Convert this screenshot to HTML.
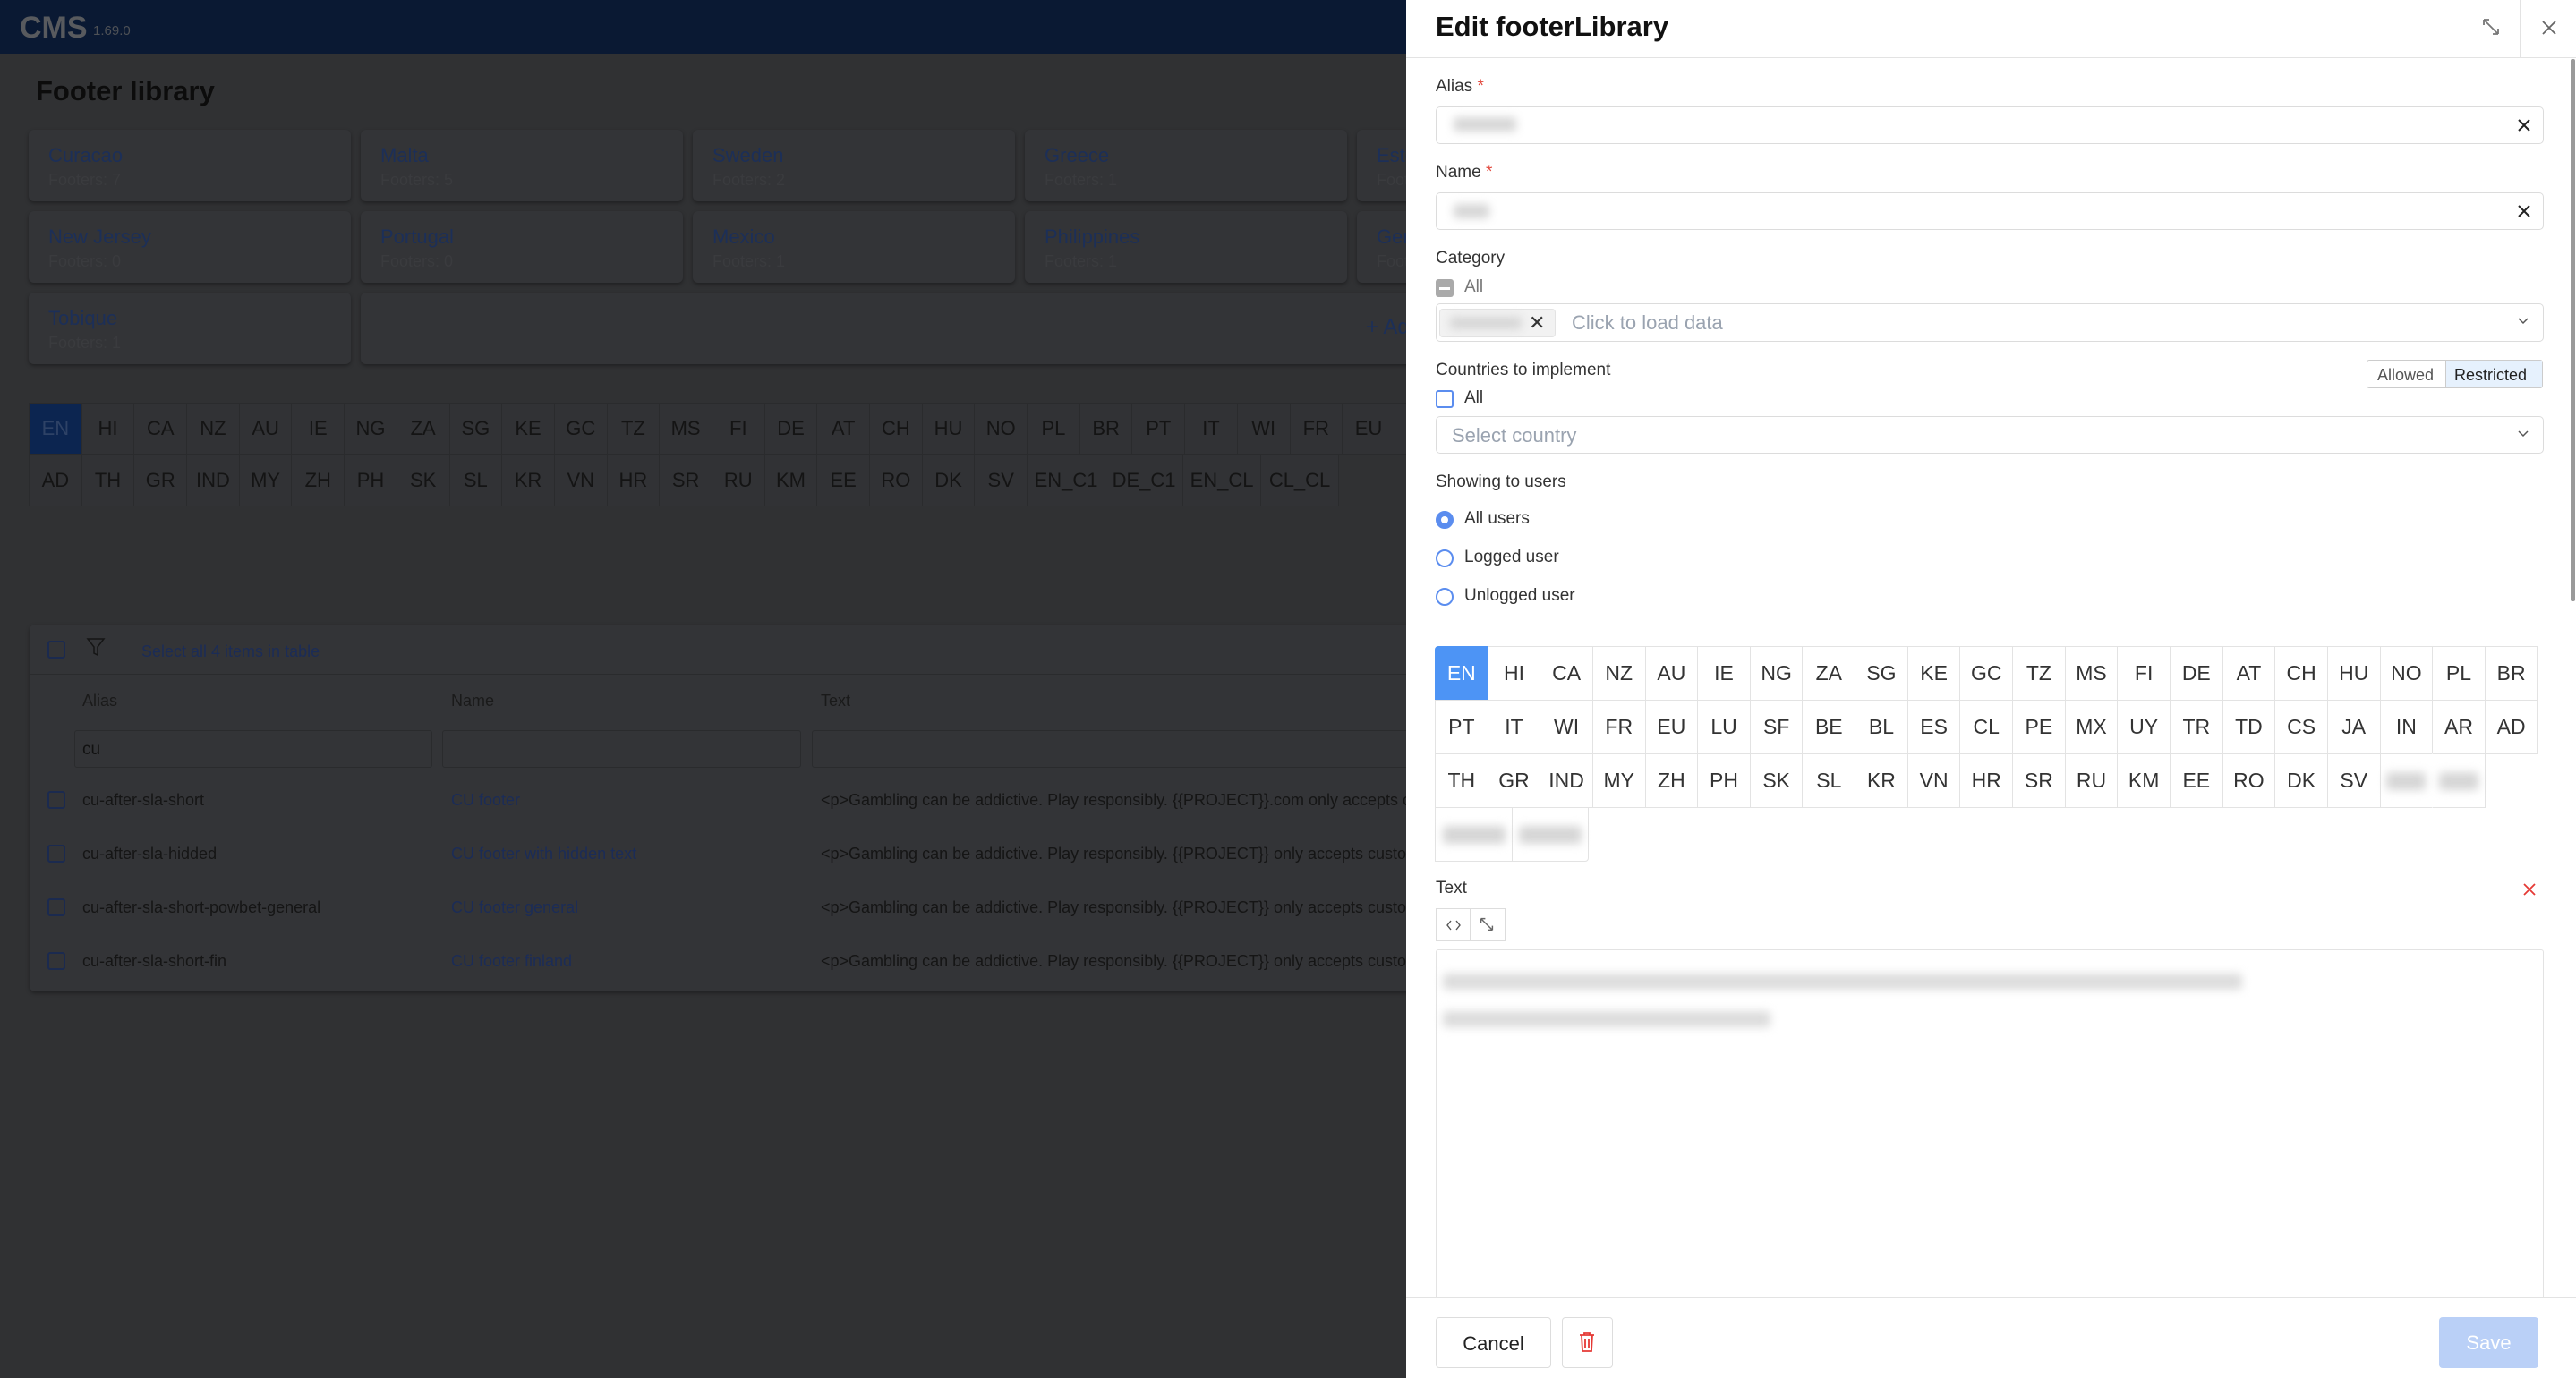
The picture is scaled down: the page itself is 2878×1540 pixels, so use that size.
<!DOCTYPE html>
<html><head><meta charset="utf-8">
<style>
*{box-sizing:border-box;margin:0;padding:0}
body{width:2878px;height:1540px;overflow:hidden;background:#303133;font-family:"Liberation Sans",sans-serif;position:relative}
.a{position:absolute}
.hdr{left:0;top:0;width:1571px;height:60px;background:#0a1933}
.card{background:#333437;border-radius:6px;box-shadow:0 2px 4px rgba(0,0,0,.35)}
.ct{font-size:22px;color:#1c2f58}
.cs{font-size:18px;color:#3a3b3e;margin-top:4px}
.lrow{display:flex}
.lc{width:59.7px;height:58px;border:1px solid #2a2b2d;margin:0 0 0 -1px;display:flex;align-items:center;justify-content:center;font-size:22px;color:#141414;background:#313235}
.dr{left:1571px;top:0;width:1307px;height:1540px;background:#fff}
.lbl{font-size:19px;color:#333;font-weight:500}
.inp{border:1px solid #dcdcdc;border-radius:5px;background:#fff}
.ph{font-size:22px;color:#9aa3b0}
.blur{background:#d6d6d6;filter:blur(5px);border-radius:4px}
.g{display:flex;flex-wrap:wrap;width:1234px}
.gc{width:59.65px;height:61px;border:1px solid #e3e3e3;margin:0 -1px -1px 0;display:flex;align-items:center;justify-content:center;font-size:23px;color:#333}
.rad{width:20px;height:20px;border:2px solid #5b8def;border-radius:50%}
.x{font-size:22px;color:#333}
</style></head><body>
<div class="a hdr"></div>
<div class="a" style="left:22px;top:12px;font-size:34px;font-weight:bold;color:#585a5e">CMS</div>
<div class="a" style="left:104px;top:26px;font-size:15px;color:#4e5156">1.69.0</div>
<div class="a" style="left:40px;top:84px;font-size:31px;font-weight:bold;color:#0c0c0c">Footer library</div>

<div class="a card" style="left:32px;top:145px;width:360px;height:80px;padding:16px 22px"><div class="ct">Curacao</div><div class="cs">Footers: 7</div></div>
<div class="a card" style="left:403px;top:145px;width:360px;height:80px;padding:16px 22px"><div class="ct">Malta</div><div class="cs">Footers: 5</div></div>
<div class="a card" style="left:774px;top:145px;width:360px;height:80px;padding:16px 22px"><div class="ct">Sweden</div><div class="cs">Footers: 2</div></div>
<div class="a card" style="left:1145px;top:145px;width:360px;height:80px;padding:16px 22px"><div class="ct">Greece</div><div class="cs">Footers: 1</div></div>
<div class="a card" style="left:1516px;top:145px;width:360px;height:80px;padding:16px 22px"><div class="ct">Estonia</div><div class="cs">Footers: 1</div></div>

<div class="a card" style="left:32px;top:236px;width:360px;height:80px;padding:16px 22px"><div class="ct">New Jersey</div><div class="cs">Footers: 0</div></div>
<div class="a card" style="left:403px;top:236px;width:360px;height:80px;padding:16px 22px"><div class="ct">Portugal</div><div class="cs">Footers: 0</div></div>
<div class="a card" style="left:774px;top:236px;width:360px;height:80px;padding:16px 22px"><div class="ct">Mexico</div><div class="cs">Footers: 1</div></div>
<div class="a card" style="left:1145px;top:236px;width:360px;height:80px;padding:16px 22px"><div class="ct">Philippines</div><div class="cs">Footers: 1</div></div>
<div class="a card" style="left:1516px;top:236px;width:360px;height:80px;padding:16px 22px"><div class="ct">Germany</div><div class="cs">Footers: 1</div></div>

<div class="a card" style="left:32px;top:327px;width:360px;height:80px;padding:16px 22px"><div class="ct">Tobique</div><div class="cs">Footers: 1</div></div>
<div class="a card" style="left:403px;top:327px;width:1300px;height:80px"></div>
<div class="a" style="left:1526px;top:352px;font-size:24px;color:#1c2f58">+ Add</div>

<div class="a" style="left:33px;top:450px">
<div class="lrow">
<div class="lc" style="background:#0c2550;color:#2e4266">EN</div><div class="lc">HI</div><div class="lc">CA</div><div class="lc">NZ</div><div class="lc">AU</div><div class="lc">IE</div><div class="lc">NG</div><div class="lc">ZA</div><div class="lc">SG</div><div class="lc">KE</div><div class="lc">GC</div><div class="lc">TZ</div><div class="lc">MS</div><div class="lc">FI</div><div class="lc">DE</div><div class="lc">AT</div><div class="lc">CH</div><div class="lc">HU</div><div class="lc">NO</div><div class="lc">PL</div><div class="lc">BR</div><div class="lc">PT</div><div class="lc">IT</div><div class="lc">WI</div><div class="lc">FR</div><div class="lc">EU</div><div class="lc">LU</div>
</div>
<div class="lrow">
<div class="lc">AD</div><div class="lc">TH</div><div class="lc">GR</div><div class="lc">IND</div><div class="lc">MY</div><div class="lc">ZH</div><div class="lc">PH</div><div class="lc">SK</div><div class="lc">SL</div><div class="lc">KR</div><div class="lc">VN</div><div class="lc">HR</div><div class="lc">SR</div><div class="lc">RU</div><div class="lc">KM</div><div class="lc">EE</div><div class="lc">RO</div><div class="lc">DK</div><div class="lc">SV</div><div class="lc" style="width:88px">EN_C1</div><div class="lc" style="width:88px">DE_C1</div><div class="lc" style="width:88px">EN_CL</div><div class="lc" style="width:88px">CL_CL</div>
</div></div>

<div class="a card" style="left:33px;top:698px;width:1600px;height:410px"></div>
<div class="a" style="left:53px;top:716px;width:20px;height:20px;border:2px solid #1b2a4f;border-radius:3px"></div>
<svg class="a" style="left:96px;top:712px" width="22" height="22" viewBox="0 0 22 22"><path d="M2 2h18l-7 9v9l-4-2v-7z" fill="none" stroke="#151515" stroke-width="1.5"/></svg>
<div class="a" style="left:158px;top:718px;font-size:18px;color:#1b2c57">Select all 4 items in table</div>
<div class="a" style="left:33px;top:753px;width:1538px;height:1px;background:#2a2b2d"></div>
<div class="a" style="left:92px;top:773px;font-size:18px;color:#1a1a1a">Alias</div>
<div class="a" style="left:504px;top:773px;font-size:18px;color:#1a1a1a">Name</div>
<div class="a" style="left:917px;top:773px;font-size:18px;color:#1a1a1a">Text</div>
<div class="a" style="left:83px;top:816px;width:400px;height:42px;border:1px solid #2a2b2d;border-radius:3px;padding:10px 8px;font-size:19px;color:#111">cu</div>
<div class="a" style="left:494px;top:816px;width:401px;height:42px;border:1px solid #2a2b2d;border-radius:3px"></div>
<div class="a" style="left:907px;top:816px;width:700px;height:42px;border:1px solid #2a2b2d;border-radius:3px"></div>

<div class="a" style="left:53px;top:884px;width:20px;height:20px;border:2px solid #1b2a4f;border-radius:3px"></div>
<div class="a" style="left:92px;top:884px;font-size:18px;color:#151515">cu-after-sla-short</div>
<div class="a" style="left:504px;top:884px;font-size:18px;color:#1b2c57">CU footer</div>
<div class="a" style="left:917px;top:884px;font-size:18px;color:#151515;white-space:nowrap">&lt;p&gt;Gambling can be addictive. Play responsibly. {{PROJECT}}.com only accepts customers</div>

<div class="a" style="left:53px;top:944px;width:20px;height:20px;border:2px solid #1b2a4f;border-radius:3px"></div>
<div class="a" style="left:92px;top:944px;font-size:18px;color:#151515">cu-after-sla-hidded</div>
<div class="a" style="left:504px;top:944px;font-size:18px;color:#1b2c57">CU footer with hidden text</div>
<div class="a" style="left:917px;top:944px;font-size:18px;color:#151515;white-space:nowrap">&lt;p&gt;Gambling can be addictive. Play responsibly. {{PROJECT}} only accepts customers</div>

<div class="a" style="left:53px;top:1004px;width:20px;height:20px;border:2px solid #1b2a4f;border-radius:3px"></div>
<div class="a" style="left:92px;top:1004px;font-size:18px;color:#151515">cu-after-sla-short-powbet-general</div>
<div class="a" style="left:504px;top:1004px;font-size:18px;color:#1b2c57">CU footer general</div>
<div class="a" style="left:917px;top:1004px;font-size:18px;color:#151515;white-space:nowrap">&lt;p&gt;Gambling can be addictive. Play responsibly. {{PROJECT}} only accepts customers</div>

<div class="a" style="left:53px;top:1064px;width:20px;height:20px;border:2px solid #1b2a4f;border-radius:3px"></div>
<div class="a" style="left:92px;top:1064px;font-size:18px;color:#151515">cu-after-sla-short-fin</div>
<div class="a" style="left:504px;top:1064px;font-size:18px;color:#1b2c57">CU footer finland</div>
<div class="a" style="left:917px;top:1064px;font-size:18px;color:#151515;white-space:nowrap">&lt;p&gt;Gambling can be addictive. Play responsibly. {{PROJECT}} only accepts customers</div>

<!-- drawer -->
<div class="a dr"></div>
<div class="a" style="left:1604px;top:12px;font-size:31px;font-weight:bold;color:#111">Edit footerLibrary</div>
<div class="a" style="left:1571px;top:64px;width:1307px;height:1px;background:#e3e3e3"></div>
<div class="a" style="left:2749px;top:0;width:1px;height:64px;background:#e3e3e3"></div>
<div class="a" style="left:2815px;top:0;width:1px;height:64px;background:#e3e3e3"></div>
<svg class="a" style="left:2773px;top:20px" width="20" height="20" viewBox="0 0 20 20"><path d="M2 2l16 16M2 2h6M2 2v6M18 18h-6M18 18v-6" stroke="#777" stroke-width="1.8" fill="none"/></svg>
<svg class="a" style="left:2840px;top:23px" width="16" height="16" viewBox="0 0 16 16"><path d="M1 1l14 14M15 1L1 15" stroke="#666" stroke-width="1.8"/></svg>
<div class="a" style="left:2872px;top:66px;width:5px;height:606px;background:#9a9a9a;border-radius:2px"></div>

<div class="a lbl" style="left:1604px;top:86px">Alias <span style="color:#e2483d">*</span></div>
<div class="a inp" style="left:1604px;top:119px;width:1238px;height:42px"></div>
<div class="a blur" style="left:1624px;top:131px;width:70px;height:16px"></div>
<svg class="a" style="left:2812px;top:132px" width="16" height="16" viewBox="0 0 16 16"><path d="M2 2l12 12M14 2L2 14" stroke="#222" stroke-width="2"/></svg>

<div class="a lbl" style="left:1604px;top:182px">Name <span style="color:#e2483d">*</span></div>
<div class="a inp" style="left:1604px;top:215px;width:1238px;height:42px"></div>
<div class="a blur" style="left:1624px;top:228px;width:40px;height:16px"></div>
<svg class="a" style="left:2812px;top:228px" width="16" height="16" viewBox="0 0 16 16"><path d="M2 2l12 12M14 2L2 14" stroke="#222" stroke-width="2"/></svg>

<div class="a lbl" style="left:1604px;top:278px">Category</div>
<div class="a" style="left:1604px;top:312px;width:20px;height:20px;background:#aaa;border-radius:3px"><div style="margin:9px 4px;height:3px;background:#fff"></div></div>
<div class="a" style="left:1636px;top:310px;font-size:19px;color:#777">All</div>
<div class="a inp" style="left:1604px;top:339px;width:1238px;height:43px"></div>
<div class="a" style="left:1608px;top:345px;width:130px;height:32px;background:#f2f2f2;border:1px solid #e3e3e3;border-radius:4px"></div>
<div class="a blur" style="left:1620px;top:354px;width:80px;height:14px"></div>
<div class="a x" style="left:1708px;top:348px">✕</div>
<div class="a ph" style="left:1756px;top:348px">Click to load data</div>
<svg class="a" style="left:2812px;top:352px" width="14" height="14" viewBox="0 0 14 14"><path d="M2 4l5 5 5-5" stroke="#555" stroke-width="1.5" fill="none"/></svg>

<div class="a lbl" style="left:1604px;top:403px">Countries to implement</div>
<div class="a" style="left:2644px;top:402px;width:197px;height:32px;border:1px solid #ccc;border-radius:3px;display:flex;font-size:18px;white-space:nowrap">
<div style="width:87px;padding:6px 0 0 11px;color:#555">Allowed</div><div style="flex:1;background:#e6f1fd;border-left:1px solid #ccc;padding:6px 0 0 9px;color:#222">Restricted</div></div>
<div class="a" style="left:1604px;top:436px;width:20px;height:20px;border:2px solid #5b8def;border-radius:3px"></div>
<div class="a" style="left:1636px;top:434px;font-size:19px;color:#333">All</div>
<div class="a inp" style="left:1604px;top:465px;width:1238px;height:42px"></div>
<div class="a ph" style="left:1622px;top:474px">Select country</div>
<svg class="a" style="left:2812px;top:478px" width="14" height="14" viewBox="0 0 14 14"><path d="M2 4l5 5 5-5" stroke="#555" stroke-width="1.5" fill="none"/></svg>

<div class="a lbl" style="left:1604px;top:528px">Showing to users</div>
<div class="a rad" style="left:1604px;top:571px;background:#5b8def"><div style="width:8px;height:8px;background:#fff;border-radius:50%;margin:4px"></div></div>
<div class="a" style="left:1636px;top:569px;font-size:19px;color:#333">All users</div>
<div class="a rad" style="left:1604px;top:614px"></div>
<div class="a" style="left:1636px;top:612px;font-size:19px;color:#333">Logged user</div>
<div class="a rad" style="left:1604px;top:657px"></div>
<div class="a" style="left:1636px;top:655px;font-size:19px;color:#333">Unlogged user</div>

<div class="a g" style="left:1603px;top:722px">
<div class="gc" style="background:#4d94f5;color:#fff;border-color:#4d94f5;border-top-left-radius:4px">EN</div><div class="gc">HI</div><div class="gc">CA</div><div class="gc">NZ</div><div class="gc">AU</div><div class="gc">IE</div><div class="gc">NG</div><div class="gc">ZA</div><div class="gc">SG</div><div class="gc">KE</div><div class="gc">GC</div><div class="gc">TZ</div><div class="gc">MS</div><div class="gc">FI</div><div class="gc">DE</div><div class="gc">AT</div><div class="gc">CH</div><div class="gc">HU</div><div class="gc">NO</div><div class="gc">PL</div><div class="gc">BR</div>
<div class="gc">PT</div><div class="gc">IT</div><div class="gc">WI</div><div class="gc">FR</div><div class="gc">EU</div><div class="gc">LU</div><div class="gc">SF</div><div class="gc">BE</div><div class="gc">BL</div><div class="gc">ES</div><div class="gc">CL</div><div class="gc">PE</div><div class="gc">MX</div><div class="gc">UY</div><div class="gc">TR</div><div class="gc">TD</div><div class="gc">CS</div><div class="gc">JA</div><div class="gc">IN</div><div class="gc">AR</div><div class="gc">AD</div>
<div class="gc">TH</div><div class="gc">GR</div><div class="gc">IND</div><div class="gc">MY</div><div class="gc">ZH</div><div class="gc">PH</div><div class="gc">SK</div><div class="gc">SL</div><div class="gc">KR</div><div class="gc">VN</div><div class="gc">HR</div><div class="gc">SR</div><div class="gc">RU</div><div class="gc">KM</div><div class="gc">EE</div><div class="gc">RO</div><div class="gc">DK</div><div class="gc">SV</div><div class="gc"><div class="blur" style="width:44px;height:20px"></div></div><div class="gc" style="border-left-color:#fff"><div class="blur" style="width:44px;height:20px"></div></div><div class="gc" style="width:5px;border:none"></div>
<div class="gc" style="width:87px"><div class="blur" style="width:70px;height:20px"></div></div><div class="gc" style="width:86px;border-bottom-right-radius:4px"><div class="blur" style="width:70px;height:20px"></div></div>
</div>

<div class="a lbl" style="left:1604px;top:982px">Text</div>
<svg class="a" style="left:2818px;top:986px" width="16" height="16" viewBox="0 0 16 16"><path d="M2 2l12 12M14 2L2 14" stroke="#e53935" stroke-width="1.8"/></svg>
<div class="a" style="left:1604px;top:1015px;width:78px;height:37px;border:1px solid #ddd;display:flex">
<svg style="margin:11px 0 0 11px" width="16" height="14" viewBox="0 0 16 14"><path d="M5 2L1 7l4 5M11 2l4 5-4 5" stroke="#555" stroke-width="1.4" fill="none"/></svg>
<div style="width:1px;background:#ddd;margin-left:10px"></div>
<svg style="margin:9px 0 0 10px" width="16" height="16" viewBox="0 0 20 20"><path d="M2 2l16 16M2 2h6M2 2v6M18 18h-6M18 18v-6" stroke="#666" stroke-width="1.8" fill="none"/></svg></div>
<div class="a" style="left:1604px;top:1061px;width:1238px;height:400px;border:1px solid #e3e3e3;border-radius:3px"></div>
<div class="a blur" style="left:1612px;top:1088px;width:893px;height:18px;background:#dcdcdc"></div>
<div class="a blur" style="left:1612px;top:1130px;width:366px;height:18px;background:#dcdcdc"></div>

<div class="a" style="left:1571px;top:1450px;width:1307px;height:90px;background:#fff;border-top:1px solid #e3e3e3"></div>
<div class="a" style="left:1604px;top:1472px;width:129px;height:57px;border:1px solid #ddd;border-radius:4px;font-size:22px;color:#222;text-align:center;padding-top:16px">Cancel</div>
<div class="a" style="left:1745px;top:1472px;width:57px;height:57px;border:1px solid #ddd;border-radius:4px"></div>
<svg class="a" style="left:1763px;top:1488px" width="20" height="24" viewBox="0 0 20 24"><path d="M2 4h16M7 4V2h6v2M4 4l1 18h10l1-18M8 8v11M12 8v11" stroke="#e53935" stroke-width="1.8" fill="none"/></svg>
<div class="a" style="left:2725px;top:1472px;width:111px;height:57px;background:#bad0f7;border-radius:4px;color:#fff;font-size:22px;text-align:center;padding-top:16px">Save</div>
</body></html>
